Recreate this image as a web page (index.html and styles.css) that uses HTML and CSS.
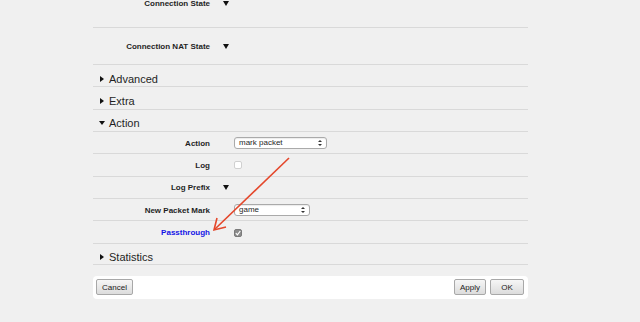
FILE: index.html
```html
<!DOCTYPE html>
<html lang="en">
<head>
  <meta charset="UTF-8">
  <meta name="viewport" content="width=device-width, initial-scale=1.0">
  <title>Mangle Rule</title>
  <link rel="stylesheet" href="styles.css">
</head>
<body>
  <div id="form">
    <div class="row first">
      <div class="label">Connection State</div>
      <div class="value"><span class="drop"></span></div>
    </div>
    <div class="row tall">
      <div class="label">Connection NAT State</div>
      <div class="value"><span class="drop"></span></div>
    </div>

    <div class="section"><span class="tri closed"></span>Advanced</div>
    <div class="section"><span class="tri closed"></span>Extra</div>
    <div class="section"><span class="tri open"></span>Action</div>

    <div class="row">
      <div class="label">Action</div>
      <div class="value"><div class="select wide">mark packet<span class="updown"></span></div></div>
    </div>
    <div class="row">
      <div class="label">Log</div>
      <div class="value"><span class="check"></span></div>
    </div>
    <div class="row">
      <div class="label">Log Prefix</div>
      <div class="value"><span class="drop"></span></div>
    </div>
    <div class="row">
      <div class="label">New Packet Mark</div>
      <div class="value"><div class="select">game<span class="updown"></span></div></div>
    </div>
    <div class="row">
      <div class="label link">Passthrough</div>
      <div class="value">
        <span class="check on">
          <svg width="6" height="6" viewBox="0 0 6 6"><path d="M0.8 3.2 L2.4 4.8 L5.3 1" fill="none" stroke="#fff" stroke-width="1.2"/></svg>
        </span>
      </div>
    </div>

    <div class="section last"><span class="tri closed"></span>Statistics</div>

    <div id="footer">
      <button>Cancel</button>
      <div class="spacer"></div>
      <button>Apply</button>
      <button class="ok">OK</button>
    </div>
  </div>

  <svg id="arrow" width="640" height="322" viewBox="0 0 640 322">
    <line x1="289" y1="158" x2="215" y2="229" stroke="#e4472b" stroke-width="1.6"/>
    <polyline points="217,218 214,230 226,227" fill="none" stroke="#e4472b" stroke-width="1.6" stroke-linejoin="miter"/>
  </svg>
</body>
</html>
```

FILE: styles.css
```css
* {
  box-sizing: border-box;
}

:root {
  --page-bg: #f0f0f0;
  --line: #d9d9d9;
  --text: #1f1f1f;
  --link: #1414e6;
}

html, body {
  margin: 0;
  height: 100%;
  background: var(--page-bg);
  color: var(--text);
  font-family: "Liberation Sans", Arial, sans-serif;
  overflow: hidden;
}

#form {
  width: 435px;
  margin-left: 93px;
  margin-top: -21px;
}

.row {
  display: grid;
  grid-template-columns: 117px 1fr;
  column-gap: 13px;
  align-items: center;
  height: 22.4px;
  padding-top: 1px;
  border-bottom: 1px solid var(--line);
}

.row.first {
  height: 49px;
}

.row.tall {
  height: 37px;
}

.label {
  text-align: right;
  font-size: 8px;
  font-weight: bold;
}

.label.link {
  color: var(--link);
}

.value {
  display: flex;
  align-items: center;
}

.drop {
  width: 0;
  height: 0;
  border-left: 3.5px solid transparent;
  border-right: 3.5px solid transparent;
  border-top: 5px solid #111;
  margin-top: -1px;
}

.select {
  position: relative;
  margin-left: 11px;
  width: 76px;
  height: 12px;
  padding: 0 0 0 4px;
  background: #fff;
  border: 1px solid #aaa;
  border-radius: 3px;
  font-size: 8px;
  line-height: 10px;
  box-shadow: inset 0 1px 1px rgba(0, 0, 0, 0.08);
}

.select.wide {
  width: 93px;
}

.updown {
  position: absolute;
  right: 4px;
  top: 2px;
  width: 4px;
  height: 6px;
}

.updown::before,
.updown::after {
  content: "";
  position: absolute;
  left: 0;
  border-left: 2px solid transparent;
  border-right: 2px solid transparent;
}

.updown::before {
  top: 0;
  border-bottom: 2.5px solid #333;
}

.updown::after {
  bottom: 0;
  border-top: 2.5px solid #333;
}

.check {
  display: flex;
  align-items: center;
  justify-content: center;
  margin-left: 11px;
  width: 8px;
  height: 8px;
  background: #fff;
  border: 1px solid #d0d0d0;
  border-radius: 2px;
}

.check.on {
  background: #8c8c8c;
  border-color: #7a7a7a;
}

.section {
  display: flex;
  align-items: center;
  height: 22.3px;
  padding-top: 6px;
  padding-left: 7px;
  font-size: 11px;
  border-bottom: 1px solid var(--line);
}

.section.last {
  height: 21px;
}

.tri {
  width: 0;
  height: 0;
  margin-right: 5px;
}

.tri.closed {
  border-top: 3px solid transparent;
  border-bottom: 3px solid transparent;
  border-left: 4px solid #111;
}

.tri.open {
  margin-left: -1px;
  margin-right: 4px;
  border-left: 3px solid transparent;
  border-right: 3px solid transparent;
  border-top: 4px solid #111;
}

#footer {
  display: flex;
  align-items: center;
  gap: 4px;
  margin-top: 11px;
  height: 23px;
  padding: 0 4px 0 3px;
  background: #fff;
  border-radius: 4px;
}

.spacer {
  flex: 1;
}

button {
  height: 16px;
  padding: 0 5px;
  font-family: "Liberation Sans", Arial, sans-serif;
  font-size: 8px;
  color: #222;
  background: linear-gradient(#f6f6f6, #dcdcdc);
  border: 1px solid #a8a8a8;
  border-radius: 2px;
}

button.ok {
  width: 34px;
}

#arrow {
  position: absolute;
  top: 0;
  left: 0;
  pointer-events: none;
}
```
